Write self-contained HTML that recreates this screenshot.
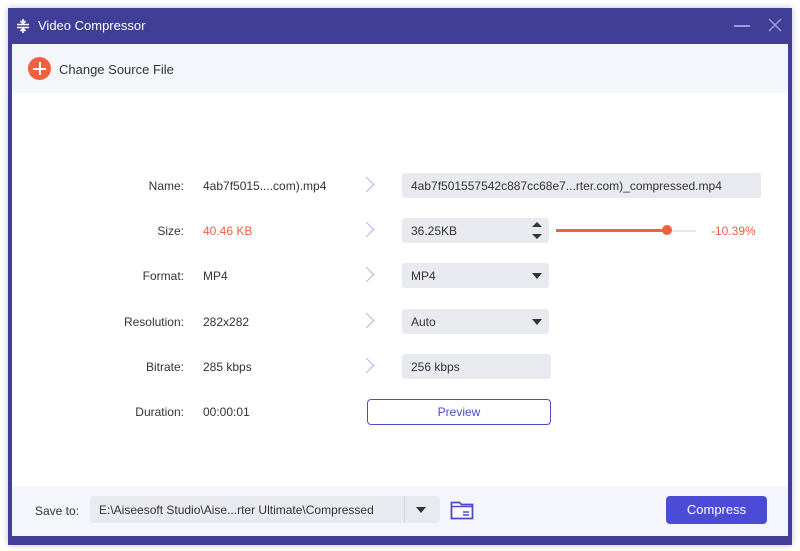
<!DOCTYPE html>
<html><head><meta charset="utf-8"><style>
*{margin:0;padding:0;box-sizing:border-box}
body{width:800px;height:551px;background:#fff;font-family:"Liberation Sans",sans-serif;position:relative;overflow:hidden;font-size:12px;color:#333}
.frame{position:absolute;left:8px;top:8px;width:784px;height:537px;background:#403e96;box-shadow:0 0 6px rgba(0,0,0,.25)}
.inner{position:absolute;left:12px;top:44px;width:776px;height:492px;background:#fff}
.top{position:absolute;left:0;top:0;width:776px;height:49px;background:#f5f6fb}
.foot{position:absolute;left:0;top:442px;width:776px;height:50px;background:#f5f6fb}
.abs{position:absolute}
.lbl{position:absolute;width:172px;text-align:right;left:0}
.box{position:absolute;background:#e9e9f0;border-radius:3px;height:25px;line-height:26px;padding-left:9px;color:#333}
.chev{position:absolute;width:11px;height:11px;border-right:1.5px solid #b3b0e6;border-top:1.5px solid #b3b0e6;transform:rotate(45deg)}
.tri{position:absolute;width:0;height:0;border-left:5px solid transparent;border-right:5px solid transparent;border-top:6px solid #333}
</style></head><body>
<div class="frame">
 <svg class="abs" style="left:8px;top:10px" width="14" height="16" viewBox="0 0 14 16"><g stroke="#fff" stroke-width="1.6" fill="none"><path d="M1 6.5h12M1 9.5h12M7 1v4M4.5 3L7 5.5 9.5 3M7 15v-4M4.5 13L7 10.5 9.5 13"/></g></svg>
 <div class="abs" style="left:30px;top:10px;color:#fff;font-size:13px">Video Compressor</div>
 <div class="abs" style="left:726px;top:17px;width:16px;height:1.5px;background:#9d9bd8"></div>
 <svg class="abs" style="left:760px;top:10px" width="14" height="14"><path d="M1 1L13 13M13 1L1 13" stroke="#9d9bd8" stroke-width="1.5"/></svg>
</div>
<div class="inner">
 <div class="top">
  <div class="abs" style="left:16px;top:13px;width:23px;height:23px;border-radius:50%;background:#f1603f"></div>
  <div class="abs" style="left:21px;top:23.5px;width:13px;height:2px;background:#fff"></div>
  <div class="abs" style="left:26.5px;top:18px;width:2px;height:13px;background:#fff"></div>
  <div class="abs" style="left:47px;top:18px;font-size:13px;color:#333">Change Source File</div>
 </div>
 <div class="lbl" style="top:135px">Name:</div>
 <div class="abs" style="left:191px;top:135px">4ab7f5015....com).mp4</div>
 <div class="chev" style="left:349px;top:135px"></div>
 <div class="box" style="left:390px;top:129px;width:359px">4ab7f501557542c887cc68e7...rter.com)_compressed.mp4</div>

 <div class="lbl" style="top:180px">Size:</div>
 <div class="abs" style="left:191px;top:180px;color:#f1603f">40.46 KB</div>
 <div class="chev" style="left:349px;top:180px"></div>
 <div class="box" style="left:390px;top:174px;width:147px">36.25KB</div>
 <div class="abs" style="left:520px;top:178px;width:0;height:0;border-left:5px solid transparent;border-right:5px solid transparent;border-bottom:5px solid #333"></div>
 <div class="abs" style="left:520px;top:190px;width:0;height:0;border-left:5px solid transparent;border-right:5px solid transparent;border-top:5px solid #333"></div>
 <div class="abs" style="left:544px;top:186px;width:140px;height:2px;background:#e6e6ee"></div>
 <div class="abs" style="left:544px;top:185px;width:112px;height:3px;background:#f1603f"></div>
 <div class="abs" style="left:650px;top:181px;width:10px;height:10px;border-radius:50%;background:#f1603f"></div>
 <div class="abs" style="left:699px;top:180px;color:#f1603f">-10.39%</div>

 <div class="lbl" style="top:225px">Format:</div>
 <div class="abs" style="left:191px;top:225px">MP4</div>
 <div class="chev" style="left:349px;top:225px"></div>
 <div class="box" style="left:390px;top:219px;width:147px">MP4</div>
 <div class="tri" style="left:520px;top:229px"></div>

 <div class="lbl" style="top:271px">Resolution:</div>
 <div class="abs" style="left:191px;top:271px">282x282</div>
 <div class="chev" style="left:349px;top:271px"></div>
 <div class="box" style="left:390px;top:265px;width:147px">Auto</div>
 <div class="tri" style="left:520px;top:275px"></div>

 <div class="lbl" style="top:316px">Bitrate:</div>
 <div class="abs" style="left:191px;top:316px">285 kbps</div>
 <div class="chev" style="left:349px;top:316px"></div>
 <div class="box" style="left:390px;top:310px;width:149px">256 kbps</div>

 <div class="lbl" style="top:361px">Duration:</div>
 <div class="abs" style="left:191px;top:361px">00:00:01</div>
 <div class="abs" style="left:355px;top:355px;width:184px;height:26px;border:1px solid #4b4bcf;border-radius:4px;text-align:center;line-height:24px;color:#4b4bcf">Preview</div>

 <div class="foot">
  <div class="abs" style="left:23px;top:18px">Save to:</div>
  <div class="box" style="left:78px;top:10px;width:350px;height:27px;line-height:28px">E:\Aiseesoft Studio\Aise...rter Ultimate\Compressed</div>
  <div class="abs" style="left:392px;top:10px;width:1px;height:27px;background:#d6d6df"></div>
  <div class="tri" style="left:404px;top:21px"></div>
  <svg class="abs" style="left:438px;top:14px" width="24" height="20" viewBox="0 0 24 20"><path d="M1.5 2.5h8l2 2h11v14h-21z" fill="#fff" stroke="#4b4bcf" stroke-width="1.8"/><path d="M1.5 6.5h21" stroke="#4b4bcf" stroke-width="1.5"/><path d="M13 12h6M13 15h6" stroke="#4b4bcf" stroke-width="1.5"/></svg>
  <div class="abs" style="left:654px;top:10px;width:101px;height:28px;background:#4b4bd6;border-radius:4px;color:#fff;text-align:center;line-height:28px;font-size:13px">Compress</div>
 </div>
</div>
</body></html>
